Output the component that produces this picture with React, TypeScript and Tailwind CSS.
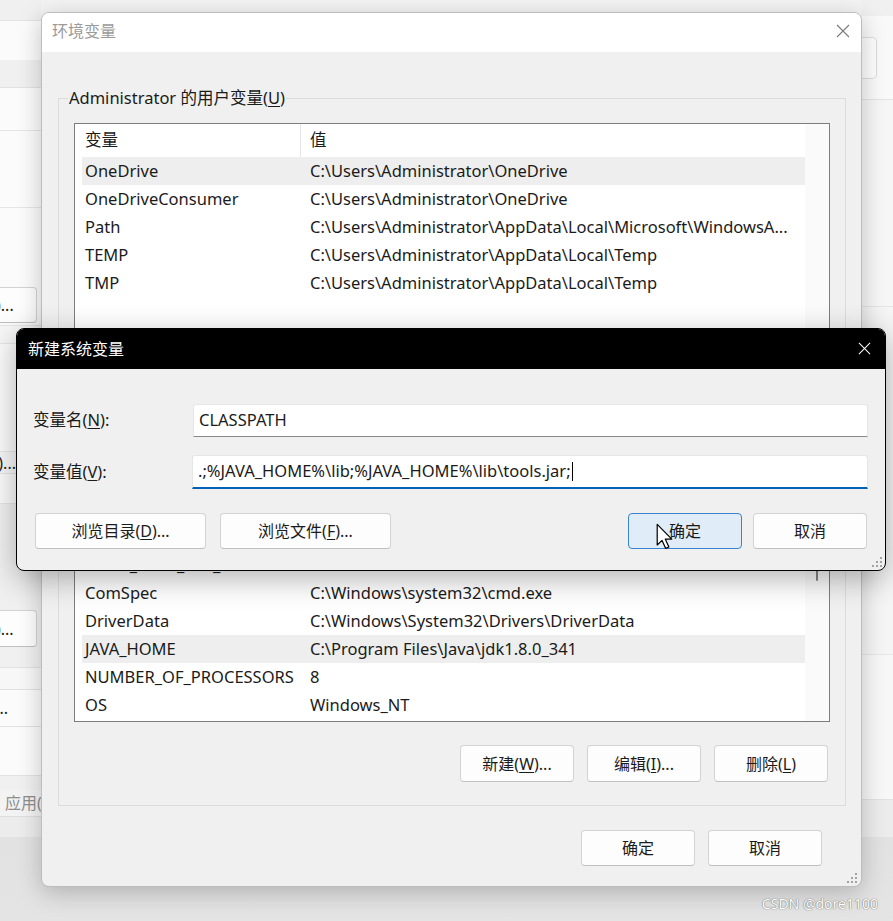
import type { ReactNode } from 'react';

type EnvVar = { name: string; value: string; active?: boolean };

const userVars: EnvVar[] = [
  { name: 'OneDrive', value: 'C:\\Users\\Administrator\\OneDrive', active: true },
  { name: 'OneDriveConsumer', value: 'C:\\Users\\Administrator\\OneDrive' },
  { name: 'Path', value: 'C:\\Users\\Administrator\\AppData\\Local\\Microsoft\\WindowsA...' },
  { name: 'TEMP', value: 'C:\\Users\\Administrator\\AppData\\Local\\Temp' },
  { name: 'TMP', value: 'C:\\Users\\Administrator\\AppData\\Local\\Temp' },
];

const systemVars: EnvVar[] = [
  { name: 'ACSetupSvcPort', value: '23210' },
  { name: 'ACSvcPort', value: '17532' },
  { name: 'CUDA_PATH_V11_7', value: 'C:\\CUDA\\v11.7' },
  { name: 'ComSpec', value: 'C:\\Windows\\system32\\cmd.exe' },
  { name: 'DriverData', value: 'C:\\Windows\\System32\\Drivers\\DriverData' },
  { name: 'JAVA_HOME', value: 'C:\\Program Files\\Java\\jdk1.8.0_341', active: true },
  { name: 'NUMBER_OF_PROCESSORS', value: '8' },
  { name: 'OS', value: 'Windows_NT' },
];

function CloseIcon({ className = '' }: { className?: string }) {
  return (
    <svg viewBox="0 0 14 14" className={className} fill="none" stroke="currentColor" strokeWidth="1.1">
      <path d="M1 1 L13 13 M13 1 L1 13" />
    </svg>
  );
}

function Grip({ className = '' }: { className?: string }) {
  return (
    <svg viewBox="0 0 10 10" className={className} fill="#a3a3a3">
      <rect x="8" y="0" width="2" height="2" />
      <rect x="4" y="4" width="2" height="2" />
      <rect x="8" y="4" width="2" height="2" />
      <rect x="0" y="8" width="2" height="2" />
      <rect x="4" y="8" width="2" height="2" />
      <rect x="8" y="8" width="2" height="2" />
    </svg>
  );
}

function Btn({ children, className = '', primary = false }: { children: ReactNode; className?: string; primary?: boolean }) {
  return (
    <div
      className={`flex shrink-0 items-center justify-center whitespace-nowrap rounded-[4px] border text-[16px] text-[#1b1b1b] ${
        primary ? 'border-[#3a83cf] bg-[#e0edf8]' : 'border-[#d3d3d3] border-b-[#c0c0c0] bg-[#fdfdfd]'
      } ${className}`}
    >
      {children}
    </div>
  );
}

function Key({ children }: { children: ReactNode }) {
  return <span className="underline underline-offset-2">{children}</span>;
}

function VarList({ rows, bottom = false, className = '' }: { rows: EnvVar[]; bottom?: boolean; className?: string }) {
  return (
    <div className={`flex border border-[#7d7d7d] bg-white ${className}`}>
      <div className="flex min-w-0 flex-1 flex-col pb-[2px] pl-[7px]">
        <div className="flex h-[33px] shrink-0 items-center pl-[3px]">
          <span className="w-[215px]">变量</span>
          <span className="h-full w-px bg-[#e6e6e6]" />
          <span className="pl-[9px]">值</span>
        </div>
        <div className={`flex min-h-0 flex-1 flex-col overflow-hidden ${bottom ? 'justify-end' : 'justify-start'}`}>
          {rows.map((r) => (
            <div key={r.name} className={`flex h-[28px] shrink-0 items-center pl-[3px] ${r.active ? 'bg-[#eeeeee]' : ''}`}>
              <span className="w-[225px] shrink-0 whitespace-nowrap">{r.name}</span>
              <span className="min-w-0 flex-1 overflow-hidden whitespace-nowrap">{r.value}</span>
            </div>
          ))}
        </div>
      </div>
      <div className="flex w-[24px] shrink-0 flex-col items-center bg-[#fafafa]">
        {bottom && <div className="mt-[74px] h-[40px] w-[2px] rounded-full bg-[#858585]" />}
      </div>
    </div>
  );
}

function Cursor() {
  return (
    <svg viewBox="0 0 14 22" className="absolute left-[656px] top-[523px] h-[27px] w-[17px]">
      <path d="M1 1 L1 18 L5 14.2 L8 20.8 L10.6 19.6 L7.7 13.2 L13 13.2 Z" fill="#ffffff" stroke="#000000" strokeWidth="1" strokeLinejoin="round" />
    </svg>
  );
}

function BackWindow() {
  return (
    <div className="absolute left-0 top-0 flex h-[837px] w-full bg-[#f3f3f3] text-[16px]">
      {/* left visible strip */}
      <div className="flex w-[41px] flex-col overflow-hidden text-[#1b1b1b]">
        <div className="h-[21px] shrink-0 border-b border-[#e2e2e2] bg-[#f0f0f0]" />
        <div className="h-[39px] shrink-0 bg-[#fbfbfb]" />
        <div className="h-[28px] shrink-0 border-b border-[#e2e2e2] bg-[#f0f0f0]" />
        <div className="h-[43px] shrink-0 border-b border-[#e6e6e6] bg-[#fbfbfb]" />
        <div className="h-[77px] shrink-0 border-b border-[#e6e6e6] bg-[#fbfbfb]" />
        <div className="flex h-[118px] shrink-0 flex-col justify-end border-b border-[#e6e6e6] bg-[#fbfbfb] pb-[2px]">
          <div className="flex justify-end pr-[4px]">
            <Btn className="h-[36px] w-[110px]">设置(T)...</Btn>
          </div>
        </div>
        <div className="h-[18px] shrink-0 border-b border-[#e6e6e6] bg-[#f7f7f7]" />
        <div className="h-[108px] shrink-0 border-b border-[#e6e6e6] bg-[#fbfbfb]" />
        <div className="flex h-[22px] shrink-0 items-center justify-end border-b border-[#e6e6e6] bg-[#f7f7f7] pr-[25px]">
          <span className="whitespace-nowrap">设置(E)...</span>
        </div>
        <div className="h-[30px] shrink-0 border-b border-[#e6e6e6] bg-[#fbfbfb]" />
        <div className="flex h-[144px] shrink-0 flex-col justify-end bg-[#f0f0f0] pb-[1px]">
          <div className="flex justify-end pr-[4px]">
            <Btn className="h-[37px] w-[110px]">设置(S)...</Btn>
          </div>
        </div>
        <div className="h-[20px] shrink-0 border-b border-[#e2e2e2] bg-[#f0f0f0]" />
        <div className="h-[22px] shrink-0 border-b border-[#e2e2e2] bg-[#f7f7f7]" />
        <div className="flex h-[37px] shrink-0 items-center justify-end border-b border-[#e2e2e2] bg-[#fbfbfb] pr-[33px]">
          <span className="whitespace-nowrap">变量(N)...</span>
        </div>
        <div className="h-[48px] shrink-0 bg-[#fbfbfb]" />
        <div className="h-[15px] shrink-0 border-t border-[#e2e2e2] bg-[#f0f0f0]" />
        <div className="flex h-[27px] shrink-0 items-center border-b border-[#dedede] bg-[#f3f3f3] pl-[5px]">
          <span className="whitespace-nowrap text-[#8e8e8e]">应用(A)</span>
        </div>
        <div className="flex-1 bg-[#ececec]" />
      </div>
      <div className="flex-1" />
      {/* right visible strip */}
      <div className="flex w-[31px] flex-col">
        <div className="h-[16px] shrink-0 bg-[#f0f0f0]" />
        <div className="flex h-[84px] shrink-0 flex-col justify-center border-b border-[#e4e4e4] bg-[#f9f9f9]">
          <div className="h-[42px] w-[15px] rounded-r-[5px] border border-l-0 border-[#dcdcdc] bg-[#fdfdfd]" />
        </div>
        <div className="h-[207px] shrink-0 border-b border-[#e6e6e6] bg-[#f6f6f6]" />
        <div className="h-[348px] shrink-0 border-b border-[#e6e6e6] bg-[#f5f5f5]" />
        <div className="h-[145px] shrink-0 border-b border-[#e2e2e2] bg-[#f7f7f7]" />
        <div className="flex-1 bg-[#ececec]" />
      </div>
    </div>
  );
}

function EnvWindow() {
  return (
    <div className="absolute left-[41px] top-[12px] flex h-[875px] w-[821px] flex-col overflow-hidden rounded-[8px] border border-[#bdbdbd] bg-[#f0f0f0] shadow-[0_6px_24px_rgba(0,0,0,0.22)]">
      <div className="flex h-[39px] shrink-0 items-center justify-between bg-white pb-[3px] pl-[10px] pr-[11px]">
        <span className="text-[16px] text-[#9b9b9b]">环境变量</span>
        <CloseIcon className="h-[14px] w-[14px] text-[#7a7a7a]" />
      </div>
      <div className="flex flex-1 flex-col pl-[16px] pr-[15px] pt-[35px]">
        <fieldset className="border border-[#dcdcdc]">
          <legend className="ml-[9px] px-[1px] leading-[22px]">
            Administrator 的用户变量(<Key>U</Key>)
          </legend>
          <div className="flex flex-col px-[15px] pb-[16px] pt-[14px]">
            <VarList rows={userVars} className="h-[220px]" />
            <div className="mt-[15px] flex justify-end gap-[13px] pr-[2px]">
              <Btn className="h-[37px] w-[114px]">新建(<Key>N</Key>)...</Btn>
              <Btn className="h-[37px] w-[114px]">编辑(<Key>E</Key>)...</Btn>
              <Btn className="h-[37px] w-[114px]">删除(<Key>D</Key>)</Btn>
            </div>
          </div>
        </fieldset>
        <fieldset className="mt-[18px] border border-[#dcdcdc]">
          <legend className="ml-[9px] px-[1px] leading-[22px]">
            系统变量(<Key>S</Key>)
          </legend>
          <div className="flex flex-col px-[15px] pb-[23px] pt-[14px]">
            <VarList rows={systemVars} bottom className="h-[256px]" />
            <div className="mt-[23px] flex justify-end gap-[13px] pr-[2px]">
              <Btn className="h-[37px] w-[114px]">新建(<Key>W</Key>)...</Btn>
              <Btn className="h-[37px] w-[114px]">编辑(<Key>I</Key>)...</Btn>
              <Btn className="h-[37px] w-[114px]">删除(<Key>L</Key>)</Btn>
            </div>
          </div>
        </fieldset>
        <div className="mt-[24px] flex justify-end gap-[13px] pr-[24px]">
          <Btn className="h-[36px] w-[114px]">确定</Btn>
          <Btn className="h-[36px] w-[114px]">取消</Btn>
        </div>
      </div>
      <Grip className="absolute bottom-[3px] right-[4px] h-[10px] w-[10px]" />
    </div>
  );
}

function NewVarDialog() {
  return (
    <div className="absolute left-[16px] top-[328px] flex h-[243px] w-[870px] flex-col overflow-hidden rounded-[8px] border border-black bg-[#f0f0f0] shadow-[0_8px_30px_rgba(0,0,0,0.3)]">
      <div className="flex h-[40px] shrink-0 items-center justify-between bg-black pb-[1px] pl-[11px] pr-[14px]">
        <span className="text-[16px] text-white">新建系统变量</span>
        <CloseIcon className="h-[13px] w-[13px] text-white" />
      </div>
      <div className="flex flex-1 flex-col pl-[16px] pr-[17px] pt-[35px]">
        <div className="flex items-center">
          <span className="w-[160px] shrink-0">
            变量名(<Key>N</Key>):
          </span>
          <div className="flex h-[33px] flex-1 items-center rounded-t-[3px] border border-[#e6e6e6] border-b-[#8a8a8a] bg-white pl-[5px]">
            CLASSPATH
          </div>
        </div>
        <div className="mt-[18px] flex items-center">
          <span className="w-[159px] shrink-0">
            变量值(<Key>V</Key>):
          </span>
          <div className="flex h-[34px] flex-1 items-center rounded-t-[3px] border border-b-2 border-[#e6e6e6] border-b-[#0063b8] bg-white pl-[5px]">
            <span className="whitespace-nowrap">.;%JAVA_HOME%\lib;%JAVA_HOME%\lib\tools.jar;</span>
            <span className="ml-px h-[19px] w-px bg-black" />
          </div>
        </div>
      </div>
      <div className="flex shrink-0 items-center pb-[21px] pl-[18px] pr-[18px]">
        <Btn className="h-[36px] w-[171px]">
          浏览目录(<Key>D</Key>)...
        </Btn>
        <Btn className="ml-[14px] h-[36px] w-[171px]">
          浏览文件(<Key>F</Key>)...
        </Btn>
        <div className="flex-1" />
        <Btn primary className="h-[36px] w-[114px]">
          确定
        </Btn>
        <Btn className="ml-[11px] h-[36px] w-[114px]">取消</Btn>
      </div>
      <Grip className="absolute bottom-[3px] right-[3px] h-[10px] w-[10px]" />
    </div>
  );
}

export default function App() {
  return (
    <div className="relative h-[921px] w-[893px] overflow-hidden bg-gradient-to-b from-[#cdcdcd] via-[#d9d9d9] to-[#e4e4e4] text-[16.5px] text-[#1b1b1b] [font-family:'Noto_Sans','Noto_Sans_CJK_SC',sans-serif]">
      <BackWindow />
      <EnvWindow />
      <NewVarDialog />
      <Cursor />
      <div className="absolute bottom-[7px] right-[15px] text-[14px] text-white [text-shadow:0_0_1px_#6f6f6f,0_0_1px_#6f6f6f]">
        CSDN @dore1100
      </div>
    </div>
  );
}
